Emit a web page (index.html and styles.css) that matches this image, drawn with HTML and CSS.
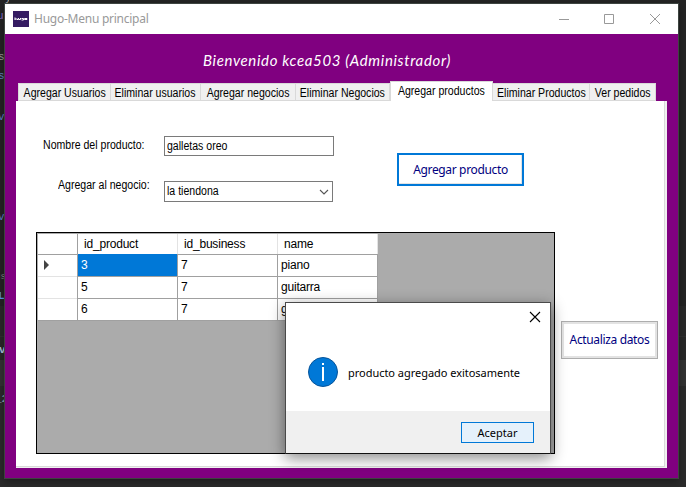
FILE: index.html
```html
<!DOCTYPE html>
<html lang="es">
<head>
<meta charset="utf-8">
<title>Hugo-Menu principal</title>
<link rel="stylesheet" href="styles.css">
</head>
<body>
<div class="desktop">
  <div class="editor">
    <span class="code c1">y</span>
    <span class="code c2">u</span>
    <span class="code c3">s</span>
    <span class="code c4">s</span>
    <span class="code c5">v</span>
    <span class="code c6">v</span>
    <span class="code c7">us</span>
    <span class="code c8">L</span>
    <span class="code c9">v</span>
    <span class="code c10">_2</span>
    <i class="tick t1"></i><i class="tick t2"></i><i class="tick t3"></i>
  </div>
  <main class="window">
    <header class="titlebar">
      <span class="logo"><svg width="16" height="16" viewBox="0 0 16 16"><path d="M2 6.500v2.500M2 8h2.500v1M5.500 7v1.500h2V7M8.500 7.500h2v1.500h-2M11.500 7.500h2.500v1h-2.500z" fill="none" stroke="#fff" stroke-width="1"/></svg></span>
      <span class="caption">Hugo-Menu principal</span>
      <svg class="controls" width="102" height="12" viewBox="0 0 102 12"><path d="M0 6.500h10M45.500 1.500h9v9h-9zM91 1l10 10M101 1L91 11" fill="none" stroke="#999"/></svg>
    </header>
    <h1 class="welcome">Bienvenido kcea503 (Administrador)</h1>
    <nav class="tabs">
      <span class="tab w1"><b>Agregar Usuarios</b></span>
      <span class="tab w2"><b>Eliminar usuarios</b></span>
      <span class="tab w3"><b>Agregar negocios</b></span>
      <span class="tab w4"><b>Eliminar Negocios</b></span>
      <span class="tab active"><b>Agregar productos</b></span>
      <span class="tab w6"><b>Eliminar Productos</b></span>
      <span class="tab w7"><b>Ver pedidos</b></span>
    </nav>
    <section class="page">
      <div class="form">
        <div class="fields">
          <label class="name-label"><b>Nombre del producto:</b></label>
          <div class="textbox"><b>galletas oreo</b></div>
          <label class="shop-label"><b>Agregar al negocio:</b></label>
          <div class="combo"><b>la tiendona</b><svg width="10" height="6" viewBox="0 0 10 6"><path d="M1 1l4 4 4-4" fill="none" stroke="#555" stroke-width="1.1"/></svg></div>
        </div>
        <div class="button add">Agregar producto</div>
      </div>
      <div class="data">
        <div class="grid">
          <div class="row head"><span></span><span>id_product</span><span>id_business</span><span>name</span></div>
          <div class="row"><span><i class="arrow"></i></span><span class="selected">3</span><span>7</span><span>piano</span></div>
          <div class="row"><span></span><span>5</span><span>7</span><span>guitarra</span></div>
          <div class="row"><span></span><span>6</span><span>7</span><span>guitarra</span></div>
        </div>
        <div class="button refresh">Actualiza datos</div>
      </div>
    </section>
  </main>
  <div class="dialog">
    <div class="dialog-close"><svg width="12" height="12" viewBox="0 0 12 12"><path d="M1 1l10 10M11 1L1 11" stroke="#000" stroke-width="1.1"/></svg></div>
    <div class="message">
      <svg width="30" height="30" viewBox="0 0 30 30"><circle cx="15" cy="15" r="14.500" fill="#0078d7" stroke="#07549a"/><path d="M14 6h2v2h-2zM14 10h2v14h-2z" fill="#fff"/></svg>
      <span class="message-text">producto agregado exitosamente</span>
    </div>
    <div class="dialog-footer"><div class="accept">Aceptar</div></div>
  </div>
</div>
</body>
</html>
```

FILE: styles.css
```css
* { box-sizing: border-box; }
body { margin: 0; background: #252525; overflow: hidden; }
.desktop {
  position: relative; width: 686px; height: 487px; overflow: hidden; white-space: nowrap;
  background: linear-gradient(#242424 0 306px, #292929 306px 336px, #303030 336px 337px, #282828 337px 360px, #333 360px 386px, #2b2b2b 386px);
  font: 12px/14px "Liberation Sans", sans-serif; color: #000;
}
.editor { position: absolute; left: 0; top: 0; width: 9px; height: 487px; overflow: hidden; }
.code { position: absolute; left: -1px; font: 11px/12px "Liberation Mono", monospace; color: #6a7fb0; }
.c1 { left: 5px; top: -8px; color: #aaa; }
.c2 { left: -3px; top: 10px; color: #8b6fc9; }
.c3 { left: -2px; top: 51px; color: #999; }
.c4 { left: -2px; top: 70px; color: #5f86c0; }
.c5 { left: -2px; top: 111px; color: #5f80cc; }
.c6 { left: -2px; top: 211px; color: #5f80cc; }
.c7 { left: -5px; top: 271px; color: #888; font-size: 9px; }
.c8 { left: -2px; top: 290px; color: #5b9bf0; font-weight: bold; }
.c9 { left: -1px; top: 344px; color: #aac4dd; font-weight: bold; }
.c10 { left: -5px; top: 393px; color: #8aa4b8; }
.tick { position: absolute; left: 4px; width: 1px; height: 3px; background: #6a9955; }
.t1 { top: 141px; } .t2 { top: 161px; } .t3 { top: 181px; }

.window {
  position: absolute; left: 4px; top: 3px; width: 675px; height: 476px;
  display: flex; flex-direction: column;
  border: 1px solid #3d4440; background: #800080; box-shadow: 0 3px 8px #0005;
}
.titlebar { height: 30px; background: #fff; display: flex; align-items: center; padding: 0 17px 0 8px; flex: none; }
.logo { width: 16px; height: 16px; background: #351b62; }
.logo svg { display: block; }
.caption { margin-left: 5px; font: 12px/16px "Noto Sans", sans-serif; color: #999; letter-spacing: -0.25px; }
.controls { margin-left: auto; }
.welcome { margin: 0 0 0 198px; height: 47px; font: italic 15px/52px Lato, cursive; letter-spacing: 0.65px; color: #fff; flex: none; }

/* condensed interface lettering */
.tab b, .fields b { display: inline-block; flex: none; font-weight: normal; transform: scaleX(0.88); transform-origin: left; }
.tab b { transform-origin: center; }

.tabs { display: flex; align-items: flex-end; height: 20px; margin-left: 13px; flex: none; }
.tab { display: flex; justify-content: center; height: 18px; background: #f0f0f0; border: 1px solid #d9d9d9; border-left-width: 0; line-height: 18px; }
.w1 { width: 93px; border-left-width: 1px; } .w2 { width: 90px; } .w3 { width: 95px; } .w4 { width: 94px; }
.active { width: 103px; height: 20px; background: #fff; border-left-width: 1px; border-bottom: 0; }
.w6 { width: 97px; } .w7 { width: 66px; }
.page { width: 651px; height: 367px; margin-left: 11px; background: #fff; border: solid #f0f0f0; border-width: 0 2px 1px 0; box-shadow: inset -1px -1px #d9d9d9; }

.form { display: flex; height: 131px; padding-left: 27px; align-items: flex-start; }
.fields { display: grid; grid-template-columns: 121px 170px; grid-template-rows: 20px 21px; row-gap: 25px; padding-top: 35px; }
.name-label { padding-top: 2px; }
.shop-label { padding: 0 0 0 15px; line-height: 9px; }
.textbox, .combo { border: 1px solid #7a7a7a; padding-left: 2px; line-height: 19px; }
.combo { width: 169px; display: flex; align-items: center; justify-content: space-between; padding-right: 3px; }
.button { display: flex; align-items: center; justify-content: center; font: 12px/16px "Noto Sans", sans-serif; letter-spacing: -0.35px; color: #000080; background: #fff; }
.add { width: 127px; height: 33px; margin: 52px 0 0 63px; border: 2px solid #0078d7; box-shadow: inset -1px -1px #e3e3e3; }

.data { display: flex; padding-left: 20px; }
.grid { width: 519px; height: 222px; border: 1px solid #000; background: #ababab; padding: 1px 0 0 1px; letter-spacing: -0.2px; }
.row { display: grid; grid-template-columns: 40px 100px 100px 100px; height: 22px; width: 340px; background: #fff; }
.row span { border: solid #a0a0a0; border-width: 0 1px 1px 0; padding-left: 3px; line-height: 22px; }
.row span:first-child { border-bottom-color: #e3e3e3; }
.row:last-child span:first-child { border-bottom-color: #a0a0a0; }
.head { height: 20px; }
.row.head span { padding-left: 6px; line-height: 20px; border-right-color: #e3e3e3; }
.row.head span:first-child { border-right-color: #a0a0a0; border-bottom-color: #a0a0a0; }
.row .selected { background: #0078d7; color: #fff; }
.arrow { display: block; margin: 6px 0 0 3px; width: 0; border: solid transparent; border-width: 5px 0 5px 5px; border-left-color: #444; }
.refresh { width: 97px; height: 38px; margin: 89px 0 0 6px; border: 1px solid #adadad; box-shadow: inset 0 0 0 2px #e3e3e3; }

.dialog {
  position: absolute; left: 285px; top: 302px; width: 266px; height: 152px;
  display: flex; flex-direction: column; background: #fff; border: 1px solid #4a4a4a; border-bottom-color: #111;
  box-shadow: 0 4px 14px #0007; font: 11px/16px "Noto Sans", sans-serif;
}
.dialog-close { display: flex; justify-content: flex-end; padding: 8px 9px 0 0; height: 54px; }
.message { display: flex; align-items: center; height: 30px; padding-left: 22px; margin-bottom: 24px; }
.message-text { margin-left: 10px; padding-top: 2px; letter-spacing: -0.03px; }
.dialog-footer { flex: 1; background: #f0f0f0; display: flex; justify-content: flex-end; padding: 11px 16px 0 0; }
.accept { width: 73px; height: 21px; border: 1px solid #0078d7; background: #e5f1fb; text-align: center; line-height: 20px; }
```
